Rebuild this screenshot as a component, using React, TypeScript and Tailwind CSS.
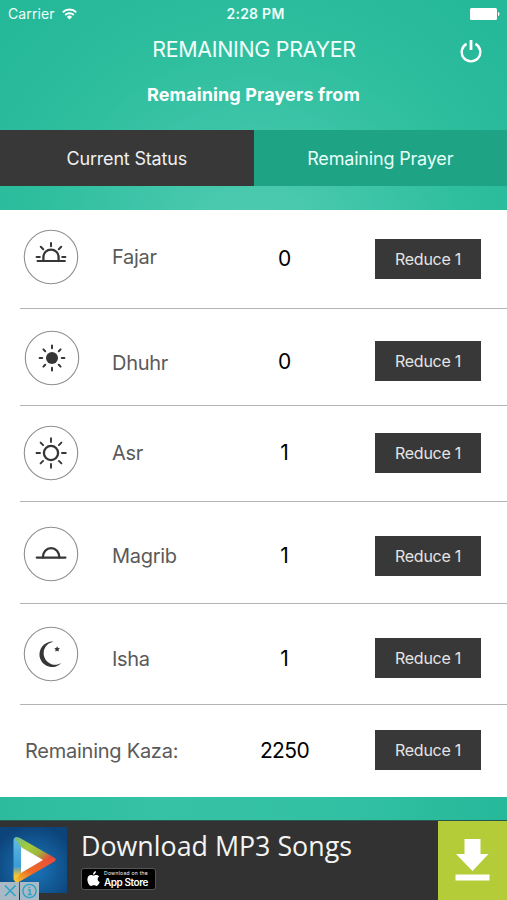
import type { ReactNode } from "react";

const ink = "#363636";

function IconRing({ children }: { children: ReactNode }) {
  return (
    <svg width="56" height="56" viewBox="-28 -28 56 56" fill="none" stroke={ink} strokeWidth="2" strokeLinecap="round">
      <circle r="26.7" stroke="#8f8f8f" strokeWidth="1.1" />
      {children}
    </svg>
  );
}

function FajarIcon() {
  return (
    <IconRing>
      <path d="M-14.4 0.1H-11.2M11.2 0.1H14.4M0 -14V-10.8M-10.2 -10.2L-7.8 -7.8M10.2 -10.2L7.8 -7.8" />
      <path d="M-7.6 3.6V0A7.6 7.4 0 0 1 7.6 0V3.6" strokeWidth="2.3" />
      <path d="M-13.4 4H13.8" strokeWidth="2.2" />
    </IconRing>
  );
}

function DhuhrIcon() {
  return (
    <IconRing>
      <circle r="6" fill={ink} stroke="none" />
      <path d="M-12.4 0H-9.8M9.8 0H12.4M0 -12.4V-9.8M0 9.8V12.4M-8.6 -8.6L-6.8 -6.8M8.6 -8.6L6.8 -6.8M-8.6 8.6L-6.8 6.8M8.6 8.6L6.8 6.8" />
    </IconRing>
  );
}

function AsrIcon() {
  return (
    <IconRing>
      <circle r="7.1" strokeWidth="2.3" />
      <path d="M-14.5 0H-11M11 0H14.8M0 -14.7V-11M0 11V14.7M-10.4 -10.4L-7.9 -7.9M10.4 -10.4L7.9 -7.9M-10.4 10.4L-7.9 7.9M10.4 10.4L7.9 7.9" strokeWidth="1.9" />
    </IconRing>
  );
}

function MagribIcon() {
  return (
    <IconRing>
      <path d="M-8.2 3.4A8.3 9.3 0 0 1 8.4 3.4" strokeWidth="2.3" />
      <path d="M-14.2 3.6H14.4" strokeWidth="2.3" />
    </IconRing>
  );
}

function IshaIcon() {
  return (
    <IconRing>
      <path d="M2.5 -12.3A12.7 12.7 0 1 0 10.4 9A11.6 11.6 0 1 1 2.5 -12.3Z" fill={ink} stroke="none" />
      <path d="M6.2 -7.8L7 -6L9 -5.8L7.5 -4.4L7.9 -2.4L6.1 -3.3L4.3 -2.4L4.6 -4.4L3.2 -5.8L5.2 -6Z" fill={ink} stroke="none" />
    </IconRing>
  );
}

// the rows of the table are not evenly spaced, so each one carries its own offsets
const rows = [
  { name: "Fajar", count: 0, icon: <FajarIcon />, row: "h-[99px]", iconPos: "ml-[23px] mt-[19px]", label: "mt-[32px]", value: "mt-[34px]", button: "mt-[29px]" },
  { name: "Dhuhr", count: 0, icon: <DhuhrIcon />, row: "h-[97px]", iconPos: "ml-[24px] mt-[21px]", label: "mt-[39px]", value: "mt-[38px]", button: "mt-[32px]" },
  { name: "Asr", count: 1, icon: <AsrIcon />, row: "h-[96px]", iconPos: "ml-[23px] mt-[19px]", label: "mt-[32px]", value: "mt-[32px]", button: "mt-[27px]" },
  { name: "Magrib", count: 1, icon: <MagribIcon />, row: "h-[102px]", iconPos: "ml-[23px] mt-[24px]", label: "mt-[39px]", value: "mt-[39px]", button: "mt-[34px]" },
  { name: "Isha", count: 1, icon: <IshaIcon />, row: "h-[101px]", iconPos: "ml-[23px] mt-[22px]", label: "mt-[40px]", value: "mt-[40px]", button: "mt-[34px]" },
];

function ReduceButton({ className }: { className: string }) {
  return (
    <button className={`h-10 w-[106px] bg-[#383838] text-[16px] leading-10 tracking-[-0.25px] text-[#e4e4e4] ${className}`}>
      Reduce 1
    </button>
  );
}

function StatusBar() {
  return (
    <div className="grid h-7 grid-cols-[1fr_auto_1fr] items-center pl-[8px] pr-[7px] text-[#eefffb]">
      <div className="flex items-center gap-[7px]">
        <span className="text-[14px] leading-7 tracking-[0.1px]">Carrier</span>
        <svg width="15" height="12" viewBox="0 0 15 12" fill="none" stroke="white" strokeWidth="1.9">
          <path d="M0.8 4.2A9.6 9.6 0 0 1 14.2 4.2" />
          <path d="M3.2 7A6.2 6.2 0 0 1 11.8 7" />
          <path d="M7.5 11.6L4.9 8.9A3.7 3.7 0 0 1 10.1 8.9Z" fill="white" stroke="none" />
        </svg>
      </div>
      <span className="pl-[3px] text-[14px] font-semibold leading-7 tracking-[0.25px]">2:28 PM</span>
      <svg className="justify-self-end" width="30" height="12" viewBox="0 0 30 12" fill="white">
        <rect width="27" height="12" rx="1.5" />
        <path d="M28 4C30 4.5 30 7.5 28 8Z" />
      </svg>
    </div>
  );
}

function AdBanner() {
  return (
    <div className="flex h-20 border-t border-[#27564c] bg-[#323232]">
      <div className="relative w-[67px] pt-[6px]">
        <svg width="67" height="66" viewBox="0 0 67 66">
          <defs>
            <radialGradient id="tile" cx="0.5" cy="0.62" r="0.65">
              <stop offset="0" stopColor="#1b78bd" />
              <stop offset="1" stopColor="#0c4379" />
            </radialGradient>
            <linearGradient id="green" x1="0" y1="0" x2="1" y2="0.7">
              <stop offset="0" stopColor="#6fb98a" />
              <stop offset="0.4" stopColor="#a5cb3a" />
              <stop offset="0.7" stopColor="#9fb53c" />
              <stop offset="1" stopColor="#e8453a" />
            </linearGradient>
            <linearGradient id="orange" x1="0" y1="1" x2="1" y2="0">
              <stop offset="0" stopColor="#f8c62c" />
              <stop offset="0.4" stopColor="#ef6a24" />
              <stop offset="1" stopColor="#ea4a3c" />
            </linearGradient>
            <linearGradient id="blue" x1="0" y1="0" x2="0" y2="1">
              <stop offset="0" stopColor="#62bde0" />
              <stop offset="0.65" stopColor="#3a9bd8" />
              <stop offset="0.85" stopColor="#f3c433" />
            </linearGradient>
          </defs>
          <rect width="67" height="66" fill="url(#tile)" />
          <path d="M13.5 13Q14 10 17 10L22 18V46L18 55Q14 55 13.5 52Z" fill="url(#blue)" />
          <path d="M14.5 11Q17 9.5 20 11L54 30.5Q56.5 32.5 54 34.5L42 33L21 20Z" fill="url(#green)" />
          <path d="M15 54.5Q18 56 20.5 54L54 34.8Q57 32.5 54.5 31L42 33L21 46Z" fill="url(#orange)" />
          <path d="M21 20L43 33L21 46Z" fill="white" />
        </svg>
        <div className="absolute bottom-0 left-0 flex gap-px">
          <svg width="19" height="18" viewBox="0 0 19 18" stroke="#2ba3c6" strokeWidth="1.6">
            <rect width="19" height="18" fill="#a9bac6" stroke="none" />
            <path d="M5 3.5L15.5 14M15.5 3.5L5 14" />
          </svg>
          <svg width="19" height="18" viewBox="0 0 19 18" fill="none" stroke="#2ba3c6" strokeWidth="1.4">
            <rect width="19" height="18" fill="#a9bac6" stroke="none" />
            <circle cx="9.5" cy="9" r="6.6" />
            <path d="M8 8H10V12.5M7.8 12.5H11.8M9.4 4.7V6.2" />
          </svg>
        </div>
      </div>
      <div className="flex-1 pl-[14px] pt-[7px]">
        <div className="whitespace-nowrap font-['Open_Sans',sans-serif] text-[26.8px] leading-9 text-[#f4f4f4]">Download MP3 Songs</div>
        <div className="mt-[4px] flex h-[22px] w-[75px] items-center gap-[4px] rounded-[3px] border border-[#555] bg-black pl-[5px] text-white">
          <svg width="13" height="16" viewBox="0 0 13 16" fill="white">
            <path d="M9 0C9 2 7.6 3.7 6 3.7C5.9 1.9 7.3 0.4 9 0Z" />
            <path d="M6.4 4.6C7.3 4.6 8 3.9 9.3 3.9C10.5 3.9 11.6 4.5 12.2 5.4C9.9 6.7 10.3 9.9 12.7 10.9C12.2 12.3 10.9 14.9 9.5 14.9C8.5 14.9 8.1 14.3 6.8 14.3C5.5 14.3 5.1 14.9 4.1 14.9C2.5 14.9 0.4 11.6 0.4 8.4C0.4 5.5 2.2 4 4 4C5.1 4 5.8 4.6 6.4 4.6Z" />
          </svg>
          <div className="whitespace-nowrap">
            <div className="text-[5px] leading-[6px] tracking-[0.27px]">Download on the</div>
            <div className="text-[10px] font-semibold leading-[12px] tracking-[-0.45px]">App Store</div>
          </div>
        </div>
      </div>
      <div className="flex w-[69px] justify-center bg-[#b3cc38] pt-[18px]">
        <svg width="35" height="42" viewBox="0 0 35 42" fill="white">
          <path d="M9.5 0H25.5V15H33.5L17.5 32L1 15H9.5Z" />
          <rect x="0.5" y="35.5" width="34" height="6" />
        </svg>
      </div>
    </div>
  );
}

export default function App() {
  return (
    <main className="flex h-[900px] w-[507px] flex-col overflow-hidden bg-[linear-gradient(90deg,#2cbc9d,#35c2a5_30%,#33c1a4_65%,#25b899)] font-['Inter','Liberation_Sans',sans-serif]">
      <header className="h-[210px] bg-[radial-gradient(circle_at_50%_260px,#55cdb3,#40c5a9_120px,#2fbf9f_210px,#25b899_330px)]">
        <StatusBar />
        <div className="grid h-[42px] grid-cols-[1fr_auto_1fr] items-center text-[#f2fffc]">
          <span />
          <h1 className="pl-px pt-px text-[21.4px] tracking-[-0.28px]">REMAINING PRAYER</h1>
          <button className="justify-self-end pr-[25px] pt-[3px]" aria-label="Log out">
            <svg width="22" height="24" viewBox="0 0 22 24" fill="none" stroke="white" strokeWidth="2.4">
              <path d="M6.6 4.9A9.3 9.3 0 1 0 15.4 4.9" />
              <path d="M11 1V11" strokeWidth="2.8" />
            </svg>
          </button>
        </div>
        <p className="h-[60px] pt-[11px] text-center text-[18px] font-bold leading-[28px] tracking-[0.12px] text-white">Remaining Prayers from</p>
        <nav className="grid h-[56px] grid-cols-2 text-[18px] tracking-[-0.18px]">
          <button className="bg-[#383838] text-[#f0f0f0]">Current Status</button>
          <button className="bg-[#1ea384] text-[#e6fff9]">Remaining Prayer</button>
        </nav>
      </header>

      <section className="h-[587px] bg-white">
        {rows.map((r) => (
          <div key={r.name} className={`relative grid grid-cols-[112px_122px_101px_40px_106px] items-start ${r.row}`}>
            <div className={r.iconPos}>{r.icon}</div>
            <span className={`text-[20px] leading-[30px] tracking-[-0.3px] text-[#5a5a5a] ${r.label}`}>{r.name}</span>
            <span className={`text-center text-[21px] leading-[30px] text-black ${r.value}`}>{r.count}</span>
            <span />
            <ReduceButton className={r.button} />
            <hr className="absolute bottom-0 left-5 right-0 h-[1.5px] border-0 bg-[#b4b4b4]" />
          </div>
        ))}
        <div className="grid h-[92px] grid-cols-[234px_101px_40px_106px] items-start">
          <span className="ml-[25px] mt-[31px] text-[20px] leading-[30px] tracking-[-0.25px] text-[#5a5a5a]">Remaining Kaza:</span>
          <span className="mt-[31px] text-center text-[21px] leading-[30px] tracking-[-0.6px] text-black">2250</span>
          <span />
          <ReduceButton className="mt-[25px]" />
        </div>
      </section>

      <div className="h-[23px]" />
      <AdBanner />
    </main>
  );
}
